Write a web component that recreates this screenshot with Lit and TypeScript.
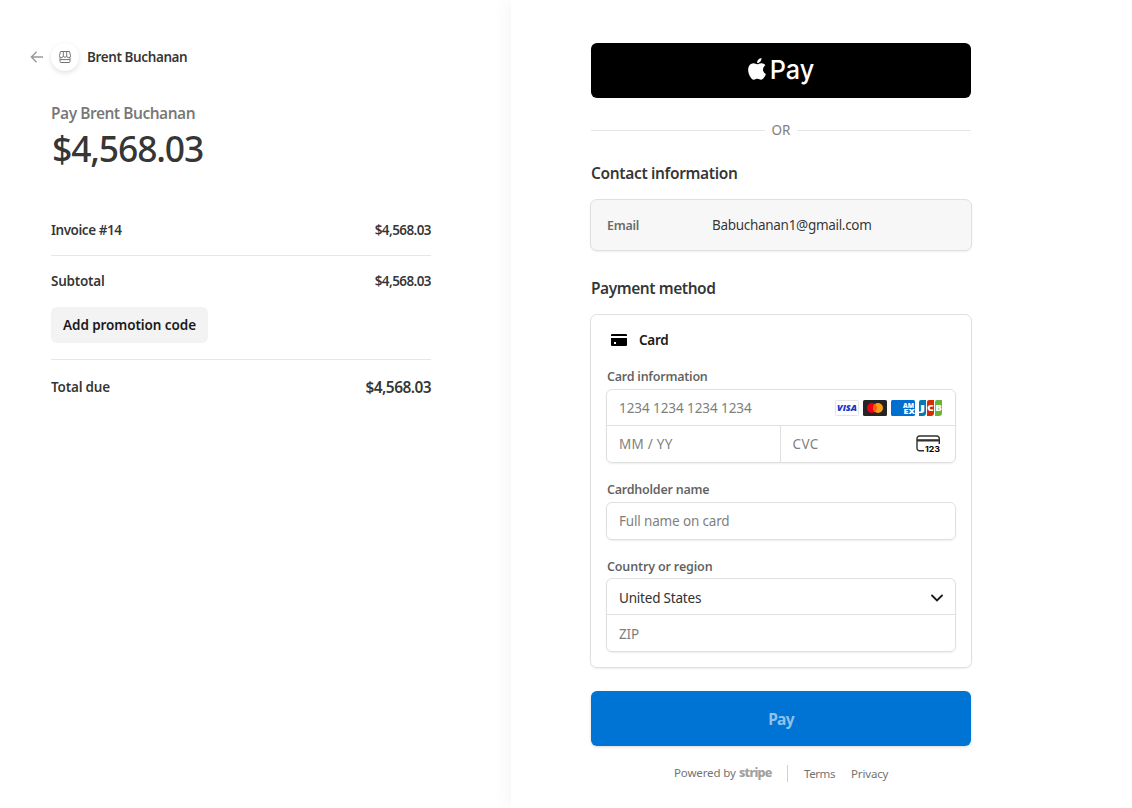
import { LitElement, html, css } from "lit";
import { customElement } from "lit/decorators.js";

@customElement("order-summary")
class OrderSummary extends LitElement {
  static styles = css`
    :host { display: block; box-sizing: border-box; padding: 43px 80px 0 51px; color: rgba(26,26,26,.9); }
    .header { display: flex; align-items: center; height: 28px; margin-left: -22px; }
    .back { width: 16px; height: 16px; margin-right: 6px; }
    .shop { width: 28px; height: 28px; border-radius: 50%; background: #fff; display: flex; align-items: center; justify-content: center; box-shadow: 0 2px 5px rgba(0,0,0,.12); }
    .name { margin-left: 8px; padding-bottom: 1px; font-size: 13.5px; font-weight: 600; letter-spacing: -.4px; }
    .for { margin-top: 30px; height: 25px; line-height: 25px; font-size: 15.5px; font-weight: 600; color: rgba(26,26,26,.6); letter-spacing: -.48px; }
    .amount { height: 46px; line-height: 44px; font-size: 35.5px; font-weight: 500; letter-spacing: -1.15px; padding-left: 1px; }
    .row { display: flex; justify-content: space-between; align-items: center; font-size: 13.5px; font-weight: 600; height: 20px; line-height: 20px; }
    .invoice { margin-top: 48px; padding-bottom: 15px; border-bottom: 1px solid #e6e6e6; }
    .item { letter-spacing: -.46px; }
    .subtotal { margin-top: 15px; letter-spacing: -.25px; }
    .row .num { letter-spacing: -.58px; }
    .promo { display: block; margin: 16px 0; height: 36px; width: 157px; padding: 0 0 1px; border: 0; border-radius: 6px; background: #f3f3f3; font: 600 13.5px "Noto Sans", sans-serif; letter-spacing: -.08px; color: #1a1a1a; white-space: nowrap; }
    .total { border-top: 1px solid #e6e6e6; padding-top: 17px; letter-spacing: -.2px; }
    .total .num { font-size: 15.5px; }
  `;
  render() {
    return html`
      <div class="header">
        <svg class="back" viewBox="0 0 16 16" fill="none" stroke="#999" stroke-width="1.4"><path d="M14 8H2.6M7.6 2.8 2.4 8l5.2 5.2"/></svg>
        <div class="shop"><svg width="12" height="12" viewBox="0 0 12 12" fill="none" stroke="#747474" stroke-width="1"><path d="M1.500.5h9l1 4a1.600 1.600 0 0 1-3.700.6 2 2 0 0 1-3.600 0A1.600 1.600 0 0 1 .5 4.500zM4.300.5V5M7.700.5V5M1 6.500V10.500q0 1 1 1H10q1 0 1-1V6.500M1 8.600H11"/></svg></div>
        <span class="name">Brent Buchanan</span>
      </div>
      <div class="for"><span>Pay Brent Buchanan</span></div>
      <div class="amount"><span>$4,568.03</span></div>
      <div class="row invoice"><span class="item">Invoice #14</span><span class="num">$4,568.03</span></div>
      <div class="row subtotal"><span>Subtotal</span><span class="num">$4,568.03</span></div>
      <button class="promo">Add promotion code</button>
      <div class="row total"><span>Total due</span><span class="num">$4,568.03</span></div>
    `;
  }
}

@customElement("card-brands")
class CardBrands extends LitElement {
  static styles = css`:host { display: flex; gap: 4px; } svg { display: block; } text { font-family: "Open Sans", sans-serif; font-weight: 800; }`;
  render() {
    return html`
      <svg width="24" height="16" viewBox="0 0 24 16"><rect x=".5" y=".5" width="23" height="15" rx="1" fill="#fff" stroke="#e4e4e4"/><text x="2" y="11.300" font-size="9" font-style="italic" textLength="20" lengthAdjust="spacingAndGlyphs" fill="#1434cb">VISA</text></svg>
      <svg width="24" height="16" viewBox="0 0 24 16"><rect width="24" height="16" rx="1.500" fill="#252525"/><circle cx="9" cy="8" r="5" fill="#eb001b"/><circle cx="15" cy="8" r="5" fill="#f79e1b"/><path d="M12 4a5 5 0 0 1 0 8 5 5 0 0 1 0-8" fill="#ff5f00"/></svg>
      <svg width="24" height="16" viewBox="0 0 24 16"><rect width="24" height="16" rx="1.500" fill="#016fd0"/><text x="12" y="7.600" font-size="7" textLength="11" lengthAdjust="spacingAndGlyphs" fill="#fff">AM</text><text x="12.500" y="13.600" font-size="7" textLength="11.500" lengthAdjust="spacingAndGlyphs" fill="#fff">EX</text></svg>
      <svg width="24" height="16" viewBox="0 0 24 16"><path d="M2 0h5v13a3 3 0 0 1-3 3H0V2a2 2 0 0 1 2-2" fill="#047ab1"/><path d="M10 0h5v13a3 3 0 0 1-3 3H8V2a2 2 0 0 1 2-2" fill="#d42d06"/><path d="M18 0h5v13a3 3 0 0 1-3 3h-4V2a2 2 0 0 1 2-2" fill="#67b637"/><text x=".8" y="10.800" font-size="8" textLength="5.500" lengthAdjust="spacingAndGlyphs" fill="#fff">J</text><text x="8.200" y="10.800" font-size="8" textLength="6.500" lengthAdjust="spacingAndGlyphs" fill="#fff">C</text><text x="16.200" y="10.800" font-size="8" textLength="6.500" lengthAdjust="spacingAndGlyphs" fill="#fff">B</text></svg>
    `;
  }
}

@customElement("payment-form")
class PaymentForm extends LitElement {
  static styles = css`
    :host { display: block; box-sizing: border-box; padding: 43px 0 0 80px; background: #fff; box-shadow: -4px 0 16px rgba(0,0,0,.04); color: rgba(26,26,26,.9); }
    .col { width: 380px; }
    .apple { height: 55px; background: #000; border-radius: 6px; display: flex; align-items: center; justify-content: center; }
    .or { display: flex; align-items: center; gap: 7px; height: 20px; margin-top: 22px; font-size: 13.5px; color: #808080; }
    .or span { padding-bottom: 1px; }
    .or::before, .or::after { content: ""; flex: 1; height: 1px; background: #e6e6e6; }
    h2 { margin: 0; font-size: 15.5px; line-height: 24px; font-weight: 600; }
    .contact { margin-top: 21px; letter-spacing: -.35px; }
    .method { margin-top: 25px; letter-spacing: -.44px; }
    .box { box-sizing: border-box; margin: 14px -1px 0; border: 1px solid #e0e0e0; border-radius: 7px; box-shadow: 0 1px 2px rgba(0,0,0,.07); }
    .email { height: 52px; background: #f7f7f7; display: flex; align-items: center; padding: 0 16px; font-size: 13.5px; }
    .email .key { width: 105px; font-size: 12.5px; font-weight: 600; color: #6b6b6b; letter-spacing: -.25px; }
    .addr { letter-spacing: -.3px; padding-bottom: 1px; }
    .card { height: 354px; padding: 15px 15px 0; }
    .choice { display: flex; align-items: center; height: 20px; padding-left: 5px; gap: 12px; font-size: 13.5px; font-weight: 600; color: #1a1a1a; letter-spacing: -.3px; }
    .choice span { padding-bottom: 1px; }
    .label { height: 20px; line-height: 19px; padding-left: 1px; font-size: 12.5px; font-weight: 600; color: rgba(26,26,26,.7); letter-spacing: -.24px; }
    .l1, .l2, .l3 { margin-top: 17px; }
    .l3 { letter-spacing: -.16px; }
    .group { box-sizing: border-box; border: 1px solid #e0e0e0; border-radius: 6px; box-shadow: 0 1px 2px rgba(0,0,0,.07); font-size: 13.5px; color: #7f7f7f; margin-top: 2px; }
    .line { display: flex; align-items: center; justify-content: space-between; height: 35px; padding: 0 12px; box-sizing: border-box; }
    .line span { padding-bottom: 1px; }
    .line .digits, .line .low { padding-bottom: 0; padding-top: 1px; }
    .line + .line, .split { border-top: 1px solid #e0e0e0; height: 37px; }
    .split { display: flex; box-sizing: border-box; }
    .split .line { flex: 1; border: 0; height: 36px; }
    .split .line + .line { border-left: 1px solid #e0e0e0; padding-right: 14px; }
    .single { height: 38px; margin-top: 2px; }
    .single .line { height: 36px; }
    .digits { letter-spacing: -.08px; } .exp { letter-spacing: .25px; } .cvc { letter-spacing: .4px; } .full { letter-spacing: -.16px; }
    .country { color: #303030; letter-spacing: -.2px; padding-top: 2px; }
    .zip { letter-spacing: -.2px; }
    .l3 + .group { margin-top: 1px; }
    .pay { margin-top: 23px; height: 55px; border-radius: 6px; background: #0074d4; box-shadow: 0 1px 3px rgba(0,0,0,.16); display: flex; align-items: center; justify-content: center; font-size: 15.5px; font-weight: 700; letter-spacing: -.7px; color: #8fc1ec; }
    .footer { display: flex; align-items: center; margin: 17px 0 0 83px; height: 20px; font-size: 11.5px; color: #737373; }
    .powered { width: 62px; letter-spacing: -.13px; padding-bottom: 2px; }
    .stripe { width: 33px; font-weight: 800; font-size: 12.5px; color: #a0a0a0; margin-left: 3px; letter-spacing: -.75px; padding-bottom: 2px; }
    .bar { width: 1px; height: 17px; background: #d0d0d0; margin: 0 16px 0 15px; }
    .terms { width: 31px; letter-spacing: -.4px; }
    .privacy { margin-left: 16px; letter-spacing: -.15px; }
  `;
  render() {
    return html`
      <div class="col">
        <div class="apple">
          <svg width="68" height="40" viewBox="0 -5 68 40" fill="#fff"><path transform="translate(1 .3) scale(.96)" d="M12.900 5.300c.8-1 1.300-2.300 1.200-3.600-1.200.1-2.500.8-3.400 1.800-.7.8-1.400 2.200-1.200 3.400 1.300.1 2.600-.6 3.400-1.600M14 7.200c-1.900-.1-3.500 1.100-4.400 1.100S7.300 7.300 5.800 7.300C3.900 7.300 2.100 8.400 1.100 10.100c-2 3.500-.5 8.600 1.400 11.400.9 1.400 2.100 2.900 3.600 2.900 1.400-.1 2-.9 3.700-.9 1.800 0 2.300.9 3.800.9 1.500 0 2.500-1.400 3.500-2.800 1.100-1.600 1.500-3.100 1.600-3.200-.1 0-3-1.200-3.100-4.600 0-2.900 2.300-4.200 2.500-4.400C16.700 7.400 14.700 7.200 14 7.200"/><text x="22.800" y="22.800" font-family="Inter, sans-serif" font-size="26" font-weight="500" textLength="44.500" lengthAdjust="spacingAndGlyphs">Pay</text></svg>
        </div>
        <div class="or"><span>OR</span></div>
        <h2 class="contact">Contact information</h2>
        <div class="box email"><span class="key">Email</span><span class="addr">Babuchanan1@gmail.com</span></div>
        <h2 class="method">Payment method</h2>
        <div class="box card">
          <div class="choice"><svg width="16" height="12" viewBox="0 0 16 12"><path d="M1 0h14q1 0 1 1v1H0V1q0-1 1-1M0 4h16v7q0 1-1 1H1q-1 0-1-1zM3 8v2h2V8z" fill="#000" fill-rule="evenodd"/></svg><span>Card</span></div>
          <div class="label l1"><span>Card information</span></div>
          <div class="group">
            <div class="line"><span class="digits">1234 1234 1234 1234</span><card-brands></card-brands></div>
            <div class="split">
              <div class="line"><span class="exp">MM / YY</span></div>
              <div class="line"><span class="cvc">CVC</span>
                <svg width="25" height="18" viewBox="0 0 25 18"><path d="M8 15.700H3.500a2.500 2.500 0 0 1-2.500-2.500V3.500A2.500 2.500 0 0 1 3.500 1h17.300a2.500 2.500 0 0 1 2.500 2.500V9" fill="none" stroke="#303030" stroke-width="1.400"/><path d="M1 4.200h22.300v2.300H1z" fill="#303030"/><text x="9" y="16.800" font-family="Inter, sans-serif" font-size="8" font-weight="700" textLength="15" lengthAdjust="spacingAndGlyphs">123</text></svg>
              </div>
            </div>
          </div>
          <div class="label l2"><span>Cardholder name</span></div>
          <div class="group single"><div class="line"><span class="full">Full name on card</span></div></div>
          <div class="label l3"><span>Country or region</span></div>
          <div class="group">
            <div class="line country"><span class="low">United States</span><svg width="12" height="8" viewBox="0 0 12 8"><path d="m1 1.500 5 5 5-5" fill="none" stroke="#1a1a1a" stroke-width="1.800" stroke-linecap="round"/></svg></div>
            <div class="line"><span class="low zip">ZIP</span></div>
          </div>
        </div>
        <div class="pay">Pay</div>
        <div class="footer"><span class="powered">Powered by</span><span class="stripe">stripe</span><span class="bar"></span><span class="terms">Terms</span><span class="privacy">Privacy</span></div>
      </div>
    `;
  }
}

@customElement("app-root")
class AppRoot extends LitElement {
  static styles = css`
    :host { display: grid; grid-template-columns: 511px 1fr; height: 808px; overflow: hidden; background: #fff; font-family: "Noto Sans", sans-serif; white-space: nowrap; }
  `;
  render() {
    return html`<order-summary></order-summary><payment-form></payment-form>`;
  }
}
